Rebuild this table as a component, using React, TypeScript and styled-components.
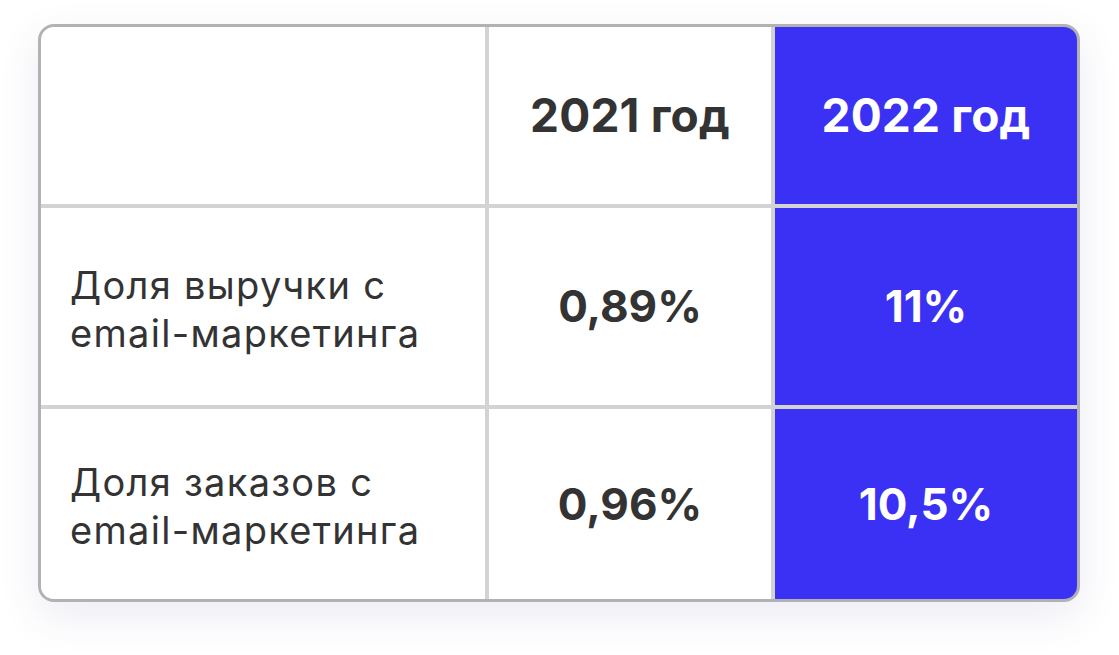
import React from "react";
import styled, { createGlobalStyle } from "styled-components";

const GlobalStyle = createGlobalStyle`
  html, body {
    margin: 0;
    padding: 0;
    background: #ffffff;
    font-family: Inter, "Noto Sans", sans-serif;
  }
`;

const StyledPage = styled.div`
  width: 1119px;
  height: 655px;
  box-sizing: border-box;
  padding: 24px 0 0 38px;
  background: #ffffff;
`;

const StyledTable = styled.div`
  width: 1042px;
  box-sizing: border-box;
  display: grid;
  grid-template-columns: 444px 282px 1fr;
  grid-template-rows: 177px 197px 190px;
  gap: 4px;
  background-color: #d3d3d3;
  border: 3px solid #b2b2b2;
  border-radius: 16px;
  overflow: hidden;
  box-shadow: 0 14px 40px rgba(70, 70, 150, 0.1);
`;

const StyledCell = styled.div<{ $accent?: boolean; $head?: boolean }>`
  display: flex;
  align-items: center;
  justify-content: center;
  background-color: ${(p) => (p.$accent ? "#3b31f4" : "#ffffff")};
  color: ${(p) => (p.$accent ? "#ffffff" : "#333333")};
  font-size: ${(p) => (p.$head ? "46px" : "44px")};
  font-weight: 700;
  line-height: 1.2;
  letter-spacing: ${(p) => (p.$head ? "0.2px" : "0")};
`;

const StyledLabelCell = styled.div`
  display: flex;
  align-items: center;
  padding: 4px 0 0 29px;
  background-color: #ffffff;
  color: #333333;
  font-size: 38px;
  font-weight: 400;
  line-height: 48px;
  letter-spacing: 1.3px;
`;

const rows = [
  { label: ["Доля выручки с", "email-маркетинга"], prev: "0,89%", next: "11%" },
  { label: ["Доля заказов с", "email-маркетинга"], prev: "0,96%", next: "10,5%" },
];

export default function App() {
  return (
    <StyledPage>
      <GlobalStyle />
      <StyledTable>
        <StyledCell />
        <StyledCell $head>2021 год</StyledCell>
        <StyledCell $head $accent>
          2022 год
        </StyledCell>
        {rows.map((r) => (
          <React.Fragment key={r.prev}>
            <StyledLabelCell>
              <div>
                {r.label[0]}
                <br />
                {r.label[1]}
              </div>
            </StyledLabelCell>
            <StyledCell>{r.prev}</StyledCell>
            <StyledCell $accent>{r.next}</StyledCell>
          </React.Fragment>
        ))}
      </StyledTable>
    </StyledPage>
  );
}
